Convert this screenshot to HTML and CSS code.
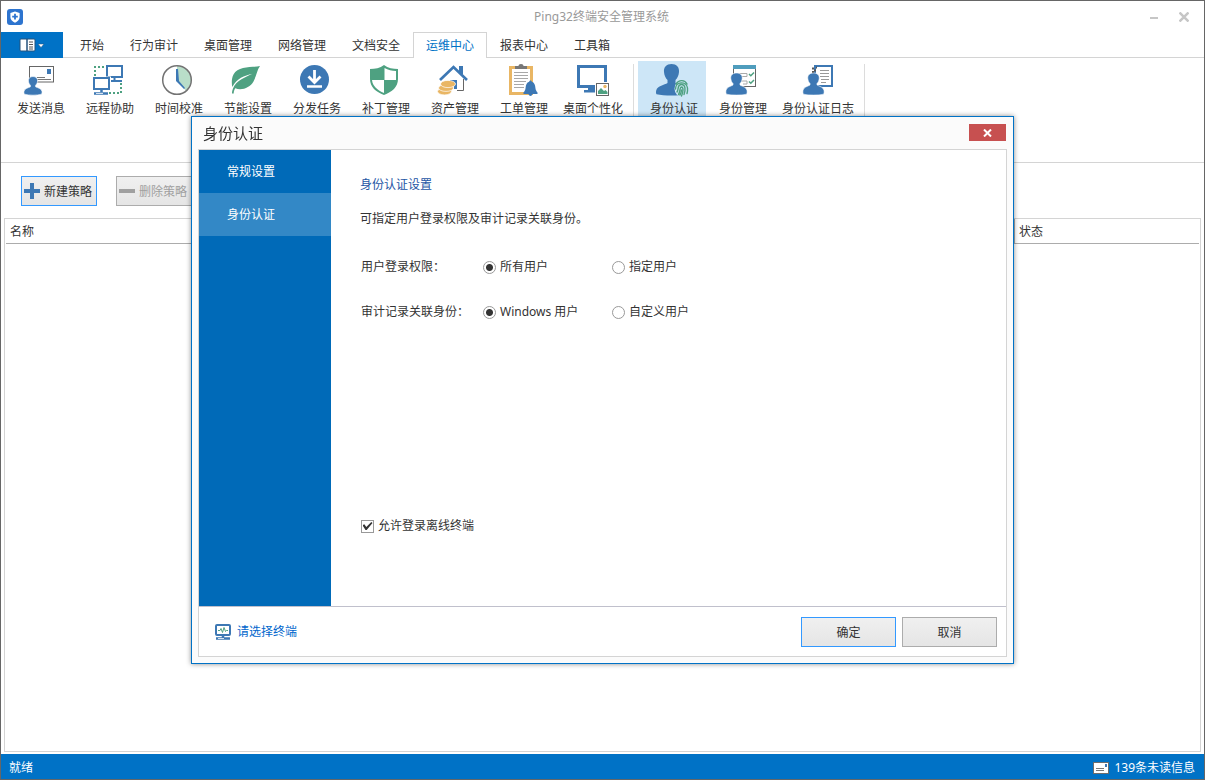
FILE: index.html
```html
<!DOCTYPE html>
<html lang="zh-CN">
<head>
<meta charset="utf-8">
<title>Ping32终端安全管理系统</title>
<link rel="stylesheet" href="styles.css">
</head>
<body>
<div class="window">
  <header class="titlebar">
    <svg class="app-logo" viewBox="0 0 16 16" aria-hidden="true">
      <rect width="16" height="16" rx="3" fill="#2d74cf"/>
      <path d="M8 2.400 12.600 4v4c0 3-2.200 4.700-4.600 5.700C5.600 12.700 3.400 11 3.400 8V4z" fill="#fff"/>
      <path d="M8 4.800v5.600M5.200 7.600h5.600" stroke="#2d74cf" stroke-width="1.800"/>
    </svg>
    <h1 class="app-title">Ping32终端安全管理系统</h1>
    <div class="window-controls">
      <button class="control" type="button" aria-label="最小化"><svg viewBox="0 0 10 10"><path d="M1 6h8" stroke="#c6c6c6" stroke-width="2"/></svg></button>
      <button class="control" type="button" aria-label="关闭"><svg viewBox="0 0 10 10"><path d="M.5.5l9 9M9.500.5l-9 9" stroke="#c6c6c6" stroke-width="2.500"/></svg></button>
    </div>
  </header>

  <nav class="tabs">
    <button class="file-tab" type="button" aria-label="菜单">
      <svg viewBox="0 0 26 14">
        <rect x="1" y="1" width="15" height="12" rx="1" fill="#fff" stroke="#24527d"/>
        <path d="M8 1v12" stroke="#24527d" stroke-width="1.500"/>
        <path d="M10 4h4M10 6.500h4M10 9h4M10 11h4" stroke="#555"/>
        <path d="M19 6h6l-3 3.500z" fill="#fff" stroke="#24527d" stroke-width=".5"/>
      </svg>
    </button>
    <button class="tab" type="button">开始</button>
    <button class="tab" type="button">行为审计</button>
    <button class="tab" type="button">桌面管理</button>
    <button class="tab" type="button">网络管理</button>
    <button class="tab" type="button">文档安全</button>
    <button class="tab active" type="button">运维中心</button>
    <button class="tab" type="button">报表中心</button>
    <button class="tab" type="button">工具箱</button>
  </nav>

  <section class="ribbon">
    <div class="ribbon-group">
      <button class="tool" type="button">
        <svg viewBox="0 0 32 32">
          <rect x="6.500" y="2.500" width="24" height="15.500" fill="#fff" stroke="#666"/>
          <rect x="24" y="5" width="4" height="5" fill="#3d78b4"/>
          <path d="M14 13.500h8M14 15.500h14" stroke="#777"/>
          <path d="M10 12.500c3 0 4.800 1.800 4.600 4.500-.2 2-1 3.200-2 4.200v1.600c2.400 1.200 5.900 1.600 6.400 4.700.2 1.300.1 2-.6 2.700-4.500 1.300-12.300 1.300-16.800 0-.7-.7-.8-1.400-.6-2.700.5-3.100 4-3.500 6.400-4.700v-1.600c-1-1-1.800-2.200-2-4.200-.2-2.700 1.600-4.500 4.600-4.500z" fill="#3d78b4" stroke="#fff" stroke-width=".6"/>
        </svg>
        <span class="tool-label">发送消息</span>
      </button>
      <button class="tool" type="button">
        <svg viewBox="0 0 32 32">
          <path d="M12 3H3v9" fill="none" stroke="#4ea181" stroke-width="2" stroke-dasharray="2 2"/>
          <path d="M29 19v10H17" fill="none" stroke="#4ea181" stroke-width="2" stroke-dasharray="2 2"/>
          <rect x="15" y="2" width="15" height="11" fill="#fff" stroke="#3d78b4" stroke-width="2"/>
          <path d="M22.500 13v3M18 17h12" stroke="#3d78b4" stroke-width="2"/>
          <path d="M.5 12.500H19v14H.5z" fill="#fff"/>
          <rect x="2" y="14" width="15" height="11" fill="#fff" stroke="#3d78b4" stroke-width="2"/>
          <path d="M9.500 25v3M2 29.500h14" stroke="#3d78b4" stroke-width="2.500"/>
          <path d="M4 29.500h7" stroke="#fff" stroke-width=".8"/>
        </svg>
        <span class="tool-label">远程协助</span>
      </button>
      <button class="tool" type="button">
        <svg viewBox="0 0 32 32">
          <circle cx="16" cy="16" r="14.300" fill="#fff"/>
          <path d="M16 16V1.700A14.300 14.300 0 0 1 25 27z" fill="#b9dec9"/>
          <circle cx="16" cy="16" r="14.300" fill="none" stroke="#737373" stroke-width="1.500"/>
          <path d="M15 5h2l1 12 6 7-1 1-8-8z" fill="#3d78b4"/>
        </svg>
        <span class="tool-label">时间校准</span>
      </button>
      <button class="tool" type="button">
        <svg viewBox="0 0 32 32">
          <path d="M30 2C21 3.500 8 2 3.500 10.500 1.500 14.500 1.500 19 2.300 23 7 14 14 12 22.500 9.800 15 13.500 6 16.500 3 24.500 2.200 26.500 2 28 2 29.500h1.700c0-2 .6-3.700 1.500-5.200C12 27 20 23.500 23.500 17.500 26.500 12 27 6 30 2z" fill="#4ea181"/>
        </svg>
        <span class="tool-label">节能设置</span>
      </button>
      <button class="tool" type="button">
        <svg viewBox="0 0 32 32">
          <circle cx="15.500" cy="15.500" r="14.500" fill="#3d78b4"/>
          <path d="M15.500 6v12M9.500 12.500l6 6 6-6" fill="none" stroke="#fff" stroke-width="2.800"/>
          <path d="M8 22.500h15" stroke="#fff" stroke-width="2.500"/>
        </svg>
        <span class="tool-label">分发任务</span>
      </button>
      <button class="tool" type="button">
        <svg viewBox="0 0 32 32">
          <path d="M16 1c4 3 9 4 14 4v10c0 8-6 13-14 16C8 28 2 23 2 15V5c5 0 10-1 14-4z" fill="#4ea181"/>
          <path d="M16.500 4c3.500 2 7.500 3 11.500 3v9H16.500z" fill="#fff"/>
          <path d="M16 16v13C9.500 26.500 4.500 22 4 16z" fill="#fff"/>
        </svg>
        <span class="tool-label">补丁管理</span>
      </button>
      <button class="tool" type="button">
        <svg viewBox="0 0 32 32">
          <path d="M7.500 15 17 6l10.500 9v12h-20z" fill="#fff"/>
          <path d="M26.500 15v11.500H20" fill="none" stroke="#666"/>
          <rect x="22" y="2" width="4" height="8" fill="#3d78b4"/>
          <path d="M3 16 16.500 3 30 16" fill="none" stroke="#3d78b4" stroke-width="2.700"/>
          <path d="M13 16h7v9h-3v-6h-4z" fill="#3d78b4"/>
          <g fill="#e9b664" stroke="#fff" stroke-width=".7">
            <ellipse cx="7.500" cy="27.500" rx="7" ry="3.400"/>
            <ellipse cx="9" cy="24" rx="7.500" ry="3.400"/>
            <ellipse cx="11" cy="20" rx="7.500" ry="3.600"/>
          </g>
        </svg>
        <span class="tool-label">资产管理</span>
      </button>
      <button class="tool" type="button">
        <svg viewBox="0 0 32 32">
          <rect x="4.500" y="3.500" width="21" height="26" fill="#fff" stroke="#e9b664" stroke-width="3"/>
          <path d="M9 5V2h3.500C12.500.8 13.500 0 15 0s2.500.8 2.500 2H21v3z" fill="#777"/>
          <path d="M8 8.500h14M8 11.500h14M8 14.500h14M8 17.500h12M8 20.500h10M8 23.500h10" stroke="#a8a8a8"/>
          <path d="M24.500 16.500c.8 0 1.300.6 1.300 1.300 2.500.8 3.400 3 3.600 6 .2 2 .8 3.400 2.100 4.700v1.500h-14v-1.500c1.300-1.300 1.900-2.700 2.100-4.700.2-3 1.100-5.200 3.600-6 0-.7.500-1.300 1.300-1.300z" fill="#3d78b4"/>
          <circle cx="24.500" cy="30.300" r="1.700" fill="#3d78b4"/>
        </svg>
        <span class="tool-label">工单管理</span>
      </button>
      <button class="tool" type="button">
        <svg viewBox="0 0 32 32">
          <rect x="3.500" y="2.500" width="27" height="20" fill="#fff" stroke="#3d78b4" stroke-width="3"/>
          <path d="M13 23h8v3h3v2.500H9V26h4z" fill="#3d78b4"/>
          <rect x="20" y="18" width="15" height="15" fill="#fff"/>
          <rect x="21.500" y="19.500" width="12" height="12" fill="#fff" stroke="#666"/>
          <circle cx="30" cy="22.500" r="1.700" fill="#e9b664"/>
          <path d="M23 30v-3l3-3 3 3 1.500-1 2 2v2z" fill="#4ea181"/>
        </svg>
        <span class="tool-label">桌面个性化</span>
      </button>
    </div>
    <div class="ribbon-group">
      <button class="tool selected" type="button">
        <svg viewBox="0 0 32 32">
          <path d="M15.500 0C20.500 0 23.500 3 23 8c-.3 3.500-1.500 6-3.500 8v3c3 2.500 10 3 11 8 .2 1.500 0 2.500-.5 3.300-7 1.600-22 1.600-29.500 0C-.1 29.300-.1 28 .2 26.500 1.500 21.500 8.500 21 11.500 19v-3C9.500 14 8.300 11.500 8 8c-.5-5 2.500-8 7.500-8z" fill="#3d78b4"/>
          <ellipse cx="25.500" cy="24.500" rx="7" ry="8" fill="#cde6f7"/>
          <g fill="none" stroke="#4ea181" stroke-width="1.400" stroke-linecap="round">
            <path d="M20 20c3-5 9-4 11 0M19.500 25c0-8 11-8 12-1 .2 2 0 4-.5 5.500M21 28c2-3 0-7 4-7.500 5-.3 4.500 6 3 10M22.500 30.500c2-3 1-7.500 3-7.500 2.500.3 1.500 5.500 0 9M25.500 26c0 2-.8 3.500-1.500 5"/>
          </g>
        </svg>
        <span class="tool-label">身份认证</span>
      </button>
      <button class="tool" type="button">
        <svg viewBox="0 0 32 32">
          <rect x="8.500" y="1.500" width="22" height="21" fill="#fff" stroke="#666"/>
          <rect x="8" y="1" width="23" height="4" fill="#4f9dbd"/>
          <path d="M13 9.500h9v3h-5M13 17h9v3h-4" fill="none" stroke="#aaa"/>
          <path d="m24 10 1.800 1.800L29 8.500M24 17.500l1.800 1.800L29 16" fill="none" stroke="#4ea181" stroke-width="1.500"/>
          <path d="M11.500 9c4 0 6 2.300 5.700 5.500-.2 2.300-1 3.800-2.200 5v1.500c2.500 1.500 6.500 2 7 5.500.3 2 .1 3-.5 3.700-5 1.200-15 1.200-20 0-.6-.7-.8-1.700-.5-3.700.5-3.500 4.500-4 7-5.500v-1.500c-1.200-1.200-2-2.700-2.200-5C5.500 11.300 7.500 9 11.500 9z" fill="#3d78b4" stroke="#fff" stroke-width=".6"/>
        </svg>
        <span class="tool-label">身份管理</span>
      </button>
      <button class="tool wide" type="button">
        <svg viewBox="0 0 32 32">
          <rect x="15" y="2" width="17" height="20" fill="#fff" stroke="#3d78b4" stroke-width="2"/>
          <path d="M20 6.500h9M20 9.500h9M20 12.500h9M21 15.500h8M21 18.500h5" stroke="#999"/>
          <path d="M12 4.500h2M14 6.500h2M12 8h2M16 3.500h1" stroke="#555" stroke-width="2"/>
          <path d="M13.500 9c4 0 6 2.300 5.700 5.500-.2 2.300-1 3.800-2.200 5v1.500c2.500 1.500 6.500 2 7 5.500.3 2 .1 3-.5 3.700-5 1.200-15 1.200-20 0-.6-.7-.8-1.700-.5-3.700.5-3.500 4.500-4 7-5.500v-1.500c-1.200-1.200-2-2.700-2.200-5C7.500 11.300 9.500 9 13.500 9z" fill="#3d78b4" stroke="#fff" stroke-width=".6"/>
        </svg>
        <span class="tool-label">身份认证日志</span>
      </button>
    </div>
  </section>

  <main class="workspace">
    <div class="actions">
      <button class="button default" type="button">
        <svg class="action-icon" viewBox="0 0 16 16"><path d="M8 0v16M0 8h16" stroke="#3d78b4" stroke-width="4"/></svg>新建策略
      </button>
      <button class="button" type="button" disabled>
        <svg class="action-icon" viewBox="0 0 16 16"><path d="M0 8h16" stroke="#a0a0a0" stroke-width="4"/></svg>删除策略
      </button>
    </div>
    <div class="grid">
      <table class="policies">
        <thead><tr><th scope="col">名称</th><th class="state" scope="col">状态</th></tr></thead>
        <tbody></tbody>
      </table>
    </div>
  </main>

  <footer class="statusbar">
    <span>就绪</span>
    <span class="unread">
      <svg viewBox="0 0 16 12"><rect x=".5" y=".5" width="15" height="11" fill="#fff" stroke="#6d6d6d"/><path d="M3 6.500h8M3 8.500h8" stroke="#777"/><rect x="12" y="2" width="2" height="3" fill="#3d78b4"/></svg>
      139条未读信息
    </span>
  </footer>
</div>

<div class="overlay">
  <section class="dialog" role="dialog" aria-labelledby="dialog-title">
    <header class="dialog-head">
      <h2 class="dialog-title" id="dialog-title">身份认证</h2>
      <button class="dialog-close" type="button" aria-label="关闭"><svg viewBox="0 0 9 8"><path d="M1 .5l7 7M8 .5l-7 7" stroke="#fff" stroke-width="2"/></svg></button>
    </header>
    <div class="dialog-frame">
      <div class="dialog-body">
        <nav class="side">
          <button class="side-item" type="button">常规设置</button>
          <button class="side-item current" type="button">身份认证</button>
        </nav>
        <form class="settings">
          <h3 class="settings-title">身份认证设置</h3>
          <p class="settings-note">可指定用户登录权限及审计记录关联身份。</p>
          <div class="option-row" role="radiogroup" aria-labelledby="login-label">
            <span id="login-label">用户登录权限：</span>
            <label class="choice"><input type="radio" name="login" checked>所有用户</label>
            <label class="choice"><input type="radio" name="login">指定用户</label>
          </div>
          <div class="option-row" role="radiogroup" aria-labelledby="audit-label">
            <span id="audit-label">审计记录关联身份：</span>
            <label class="choice"><input type="radio" name="audit" checked>Windows 用户</label>
            <label class="choice"><input type="radio" name="audit">自定义用户</label>
          </div>
          <label class="choice offline"><input type="checkbox" checked>允许登录离线终端</label>
        </form>
      </div>
      <footer class="dialog-foot">
        <a class="terminal-link" href="#">
          <svg viewBox="0 0 16 16"><rect x="1" y="1" width="14" height="10" rx="1" fill="#fff" stroke="#3d78b4" stroke-width="2"/><path d="M3 6.500h2l1-2 1.500 4 1.500-5 1.500 4 1-1H13" fill="none" stroke="#4ea181"/><path d="M8 11v3M1 14.500h14" stroke="#3d78b4" stroke-width="2.500"/><path d="M3 14.500h6" stroke="#fff" stroke-width=".8"/></svg>
          请选择终端
        </a>
        <button class="button big default" type="button">确定</button>
        <button class="button big" type="button">取消</button>
      </footer>
    </div>
  </section>
</div>
</body>
</html>
```

FILE: styles.css
```css
* {
  box-sizing: border-box;
}

body {
  margin: 0;
  color: #333;
  background: #fff;
  font: 12px/20px "Noto Sans", "Noto Sans CJK SC", sans-serif;
}

button {
  margin: 0;
  padding: 0;
  border: 0;
  background: none;
  color: inherit;
  font: inherit;
}

h1, h2, h3, p {
  margin: 0;
  font-size: 12px;
  font-weight: 400;
}

svg {
  display: block;
  flex: none;
}

.window {
  display: flex;
  flex-direction: column;
  min-height: 100vh;
  border: 1px solid #666;
}

/* Title bar */
.titlebar {
  display: grid;
  grid-template-columns: 1fr auto 1fr;
  align-items: center;
  height: 31px;
  padding: 0 15px 0 6px;
}

.app-logo {
  width: 16px;
  height: 16px;
}

.app-title {
  padding-left: 7px;
  color: #999;
}

.window-controls {
  display: flex;
  justify-content: flex-end;
  gap: 20px;
}

.control svg {
  width: 10px;
  height: 10px;
}

/* Ribbon tabs */
.tabs {
  display: flex;
  height: 26px;
  box-shadow: inset 0 -1px #d4d4d4;
}

.file-tab {
  display: grid;
  place-items: center;
  width: 62px;
  margin-right: 4px;
  background: #0072c6;
}

.file-tab svg {
  width: 26px;
  height: 14px;
}

.tab {
  padding: 0 12px;
  border: 1px solid transparent;
  border-bottom: 0;
}

.tab.active {
  color: #0072c6;
  background: #fff;
  border-color: #d4d4d4;
}

/* Ribbon */
.ribbon {
  display: flex;
  min-height: 105px;
  padding: 3px 4px;
  border-bottom: 1px solid #d4d4d4;
}

.ribbon-group {
  display: flex;
  align-items: flex-start;
  gap: 1px;
  padding-right: 9px;
  margin-right: 4px;
  background: linear-gradient(#dcdcdc, #dcdcdc) right 3px / 1px 56px no-repeat;
}

.tool {
  display: flex;
  flex-direction: column;
  align-items: center;
  width: 68px;
  padding: 3px 0 4px;
}

.tool.wide {
  width: 80px;
}

.tool.selected {
  background: #cde6f7;
}

.tool svg {
  width: 32px;
  height: 32px;
  overflow: visible;
}

.tool-label {
  margin-top: 3px;
  padding-left: 4px;
  white-space: nowrap;
}

/* Workspace */
.workspace {
  flex: 1;
  display: flex;
  flex-direction: column;
  padding: 13px 3px 2px;
}

.actions {
  display: flex;
  gap: 19px;
  padding: 0 17px 12px;
}

.button {
  display: inline-flex;
  align-items: center;
  justify-content: center;
  gap: 4px;
  height: 30px;
  padding: 2px 4px 0 2px;
  border: 1px solid #acacac;
  background: linear-gradient(#f0f0f0, #e5e5e5);
}

.button.default {
  border-color: #3399ff;
}

.button:disabled {
  color: #a0a0a0;
}

.button.big {
  width: 95px;
  padding: 2px 0 0;
}

.action-icon {
  width: 16px;
  height: 16px;
  margin-bottom: 2px;
}

.grid {
  flex: 1;
  padding: 0 1px;
  border: 1px solid #d4d4d4;
}

.policies {
  width: 100%;
  table-layout: fixed;
  border-collapse: separate;
  border-spacing: 0;
}

.policies th {
  height: 25px;
  padding: 2px 4px 0;
  border-bottom: 1px solid #acacac;
  font-weight: 400;
  text-align: left;
}

.policies .state {
  width: 185px;
  border-left: 1px solid #acacac;
}

/* Status bar */
.statusbar {
  display: flex;
  align-items: center;
  justify-content: space-between;
  height: 25px;
  padding: 2px 9px 0 8px;
  color: #fff;
  background: #0072c6;
}

.unread {
  display: flex;
  align-items: center;
  gap: 5px;
}

.unread svg {
  width: 16px;
  height: 12px;
}

/* Dialog */
.overlay {
  position: fixed;
  inset: 0;
  display: grid;
  place-items: center;
}

.dialog {
  display: flex;
  flex-direction: column;
  width: min(823px, 100%);
  min-height: min(548px, 100%);
  padding: 0 6px 6px;
  border: 1px solid #0072c6;
  background: #fbfbfb;
  box-shadow: 0 0 5px rgba(0, 0, 0, 0.45);
}

.dialog-head {
  display: flex;
  align-items: center;
  justify-content: space-between;
  height: 32px;
  padding: 0 1px 0 5px;
}

.dialog-title {
  font-size: 15px;
}

.dialog-close {
  display: grid;
  place-items: center;
  width: 37px;
  height: 17px;
  margin-bottom: 1px;
  background: #c75050;
}

.dialog-close svg {
  width: 9px;
  height: 8px;
}

.dialog-frame {
  flex: 1;
  display: flex;
  flex-direction: column;
  border: 1px solid #d4d4d4;
  background: #fff;
}

.dialog-body {
  flex: 1;
  display: flex;
}

.side {
  display: flex;
  flex-direction: column;
  width: 132px;
  background: #006ab8;
}

.side-item {
  height: 43px;
  padding-left: 28px;
  color: #fff;
  text-align: left;
}

.side-item.current {
  background: #3388c6;
}

.settings {
  flex: 1;
  display: flex;
  flex-direction: column;
  padding: 25px 29px 70px;
}

.settings-title {
  color: #2455a4;
}

.settings-note {
  margin: 14px 0 28px;
}

.option-row {
  display: grid;
  grid-template-columns: 122px 129px auto;
  justify-content: start;
  margin: 0 0 25px 1px;
}

.choice {
  display: flex;
  align-items: center;
  gap: 4px;
}

.choice input {
  appearance: none;
  width: 13px;
  height: 13px;
  margin: 0;
  border: 1px solid #999;
  background: #fff;
}

.choice input[type="radio"] {
  border-radius: 50%;
}

.choice input[type="radio"]:checked {
  background: radial-gradient(circle, #333 3px, #fff 4px);
}

.choice input[type="checkbox"] {
  display: grid;
  place-items: center;
}

.choice input[type="checkbox"]:checked::before {
  content: "";
  width: 10px;
  height: 8px;
  background: #333;
  clip-path: polygon(0 40%, 18% 28%, 38% 62%, 88% 0, 100% 12%, 42% 100%, 30% 100%);
}

.offline {
  margin: auto 0 0 1px;
}

.dialog-foot {
  display: flex;
  align-items: center;
  gap: 6px;
  height: 50px;
  padding: 0 9px 0 16px;
  border-top: 1px solid #c0c0cc;
}

.terminal-link {
  display: flex;
  align-items: center;
  gap: 6px;
  margin-right: auto;
  color: #0066cc;
  text-decoration: none;
}

.terminal-link svg {
  width: 16px;
  height: 16px;
}
```
